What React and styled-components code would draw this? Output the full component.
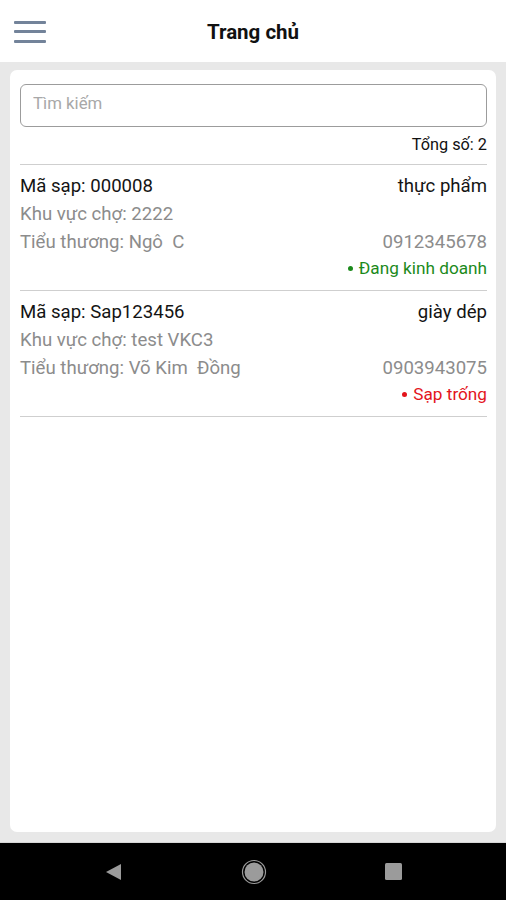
import React from "react";
import styled, { createGlobalStyle } from "styled-components";

const Global = createGlobalStyle`
  html, body { margin: 0; padding: 0; }
  body { font-family: Roboto, "Noto Sans", "Liberation Sans", sans-serif; background: #e8e8e8; }
  * { box-sizing: border-box; }
`;

const Screen = styled.div`
  width: 506px;
  height: 900px;
  display: flex;
  flex-direction: column;
  background: #e8e8e8;
`;

const Header = styled.header`
  height: 62px;
  background: #fff;
  display: flex;
  align-items: center;
  position: relative;
  flex-shrink: 0;
`;

const MenuButton = styled.div`
  width: 32px;
  margin-left: 14px;
  display: flex;
  flex-direction: column;
  gap: 6.5px;
  padding-top: 1px;
`;

const MenuLine = styled.span`
  display: block;
  height: 3px;
  background: #73839a;
  border-radius: 1px;
`;

const Title = styled.h1`
  position: absolute;
  left: 0;
  right: 0;
  top: 0;
  bottom: 0;
  margin: 0;
  display: flex;
  align-items: center;
  justify-content: center;
  font-size: 20.5px;
  font-weight: 700;
  color: #111;
  pointer-events: none;
  padding-top: 1px;
`;

const Main = styled.main`
  flex: 1;
  padding: 8px 10px 10px 10px;
  display: flex;
`;

const Card = styled.section`
  flex: 1;
  background: #fff;
  border-radius: 7px;
  padding: 14px 9px 0 10px;
  display: flex;
  flex-direction: column;
`;

const Search = styled.input`
  height: 43px;
  width: 100%;
  border: 1px solid #9c9c9c;
  border-radius: 6px;
  padding: 0 12px 5px;
  font-family: inherit;
  font-size: 16.8px;
  color: #333;
  outline: none;
  &::placeholder { color: #a8a8a8; }
`;

const Total = styled.div`
  text-align: right;
  font-size: 16.3px;
  color: #111;
  line-height: 20px;
  margin-top: 8px;
  padding-bottom: 9px;
  border-bottom: 1px solid #cfcfcf;
`;

const Item = styled.div`
  padding: 7px 0 10px;
  border-bottom: 1px solid #cfcfcf;
`;

const Row = styled.div`
  display: flex;
  justify-content: space-between;
  align-items: center;
  height: 28px;
  font-size: 18.6px;
  color: ${(p) => (p.$muted ? "#8c8c8c" : "#141414")};
`;

const StatusRow = styled.div`
  display: flex;
  justify-content: flex-end;
  align-items: center;
  height: 24px;
  font-size: 17.2px;
  color: ${(p) => p.$color};
  gap: 6px;
`;

const Dot = styled.span`
  width: 5px;
  height: 5px;
  border-radius: 50%;
  background: currentColor;
`;

const NavBar = styled.nav`
  height: 58px;
  background: #000;
  display: flex;
  align-items: center;
  justify-content: space-between;
  padding: 0 104px 0 105px;
  flex-shrink: 0;
  border-top: 1px solid #d6d6d6;
`;

const NavIcon = styled.svg`
  display: block;
`;

const items = [
  {
    code: "000008",
    type: "thực phẩm",
    area: "2222",
    owner: "Ngô  C",
    phone: "0912345678",
    status: "Đang kinh doanh",
    color: "#1b8a1b",
  },
  {
    code: "Sap123456",
    type: "giày dép",
    area: "test VKC3",
    owner: "Võ Kim  Đồng",
    phone: "0903943075",
    status: "Sạp trống",
    color: "#e3141b",
  },
];

export default function App() {
  return (
    <>
      <Global />
      <Screen>
        <Header>
          <MenuButton>
            <MenuLine />
            <MenuLine />
            <MenuLine />
          </MenuButton>
          <Title>Trang chủ</Title>
        </Header>
        <Main>
          <Card>
            <Search placeholder="Tìm kiếm" />
            <Total>Tổng số: 2</Total>
            {items.map((it) => (
              <Item key={it.code}>
                <Row>
                  <span>Mã sạp: {it.code}</span>
                  <span>{it.type}</span>
                </Row>
                <Row $muted>
                  <span>Khu vực chợ: {it.area}</span>
                </Row>
                <Row $muted>
                  <span style={{ whiteSpace: "pre" }}>Tiểu thương: {it.owner}</span>
                  <span>{it.phone}</span>
                </Row>
                <StatusRow $color={it.color}>
                  <Dot />
                  <span>{it.status}</span>
                </StatusRow>
              </Item>
            ))}
          </Card>
        </Main>
        <NavBar>
          <NavIcon width="17" height="18" viewBox="0 0 17 18">
            <path d="M1 9 L16 1 L16 17 Z" fill="#9b9b9b" />
          </NavIcon>
          <NavIcon width="26" height="26" viewBox="0 0 26 26">
            <circle cx="13" cy="13" r="11.5" fill="none" stroke="#9b9b9b" strokeWidth="1.2" />
            <circle cx="13" cy="13" r="9.5" fill="#9b9b9b" />
          </NavIcon>
          <NavIcon width="17" height="17" viewBox="0 0 17 17">
            <rect x="0" y="0" width="17" height="17" rx="1.5" fill="#9b9b9b" />
          </NavIcon>
        </NavBar>
      </Screen>
    </>
  );
}
